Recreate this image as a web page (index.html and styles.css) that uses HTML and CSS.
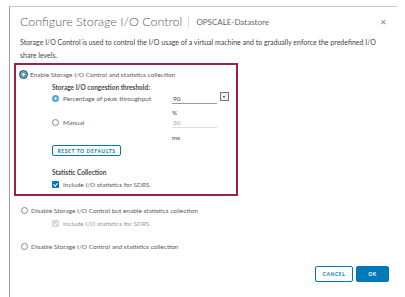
FILE: index.html
```html
<!DOCTYPE html>
<html lang="en">
<head>
    <meta charset="UTF-8">
    <title>Configure Storage I/O Control</title>
    <link rel="stylesheet" href="styles.css">
</head>
<body>
    <div class="modal">
        <div class="modal-header">
            <h3 class="modal-title">Configure Storage I/O Control</h3>
            <span class="divider"></span>
            <span class="subtitle">OPSCALE-Datastore</span>
            <span class="close">&#x2715;</span>
        </div>

        <p class="intro">Storage I/O Control is used to control the I/O usage of a virtual machine and to gradually enforce the predefined I/O share levels.</p>

        <div class="highlight">
            <label class="option">
                <span class="radio checked focus"></span>
                Enable Storage I/O Control and statistics collection
            </label>

            <div class="sub">
                <div class="sub-title">Storage I/O congestion threshold:</div>

                <div class="row">
                    <label class="option label-col">
                        <span class="radio checked"></span>
                        Percentage of peak throughput
                    </label>
                    <span class="field">90</span>
                    <span class="drop"></span>
                </div>
                <div class="row unit-row">
                    <span class="label-col"></span>
                    <span class="unit">%</span>
                </div>
                <div class="row">
                    <label class="option label-col">
                        <span class="radio"></span>
                        Manual
                    </label>
                    <span class="field disabled">30</span>
                </div>
                <div class="row unit-row ms">
                    <span class="label-col"></span>
                    <span class="unit">ms</span>
                </div>

                <button class="btn-outline reset">Reset to defaults</button>

                <div class="sub-title stat">Statistic Collection</div>
                <label class="option check-row">
                    <span class="check checked"></span>
                    Include I/O statistics for SDRS
                </label>
            </div>
        </div>

        <label class="option outer">
            <span class="radio"></span>
            Disable Storage I/O Control but enable statistics collection
        </label>
        <label class="option outer-sub muted">
            <span class="check disabled"></span>
            Include I/O statistics for SDRS
        </label>
        <label class="option outer last">
            <span class="radio"></span>
            Disable Storage I/O Control and statistics collection
        </label>

        <div class="footer">
            <button class="btn-outline cancel">Cancel</button>
            <button class="btn-primary">OK</button>
        </div>
    </div>
</body>
</html>
```

FILE: styles.css
```css
body {
    margin: 0;
    font-family: Lato, "Open Sans", sans-serif;
    color: #444;
    background: #fff;
}
.modal {
    margin: 6px 0 0 9px;
    width: 388px;
    height: 291px;
    border-top: 1px solid #c8c8c8;
    border-left: 1px solid #9a9a9a;
    box-sizing: border-box;
}
.modal-header {
    display: flex;
    align-items: center;
    height: 29px;
    padding: 0 10px;
}
.modal-title {
    margin: 0;
    font-size: 12.5px;
    font-weight: 300;
    color: #5a5a5a;
}
.divider {
    width: 1px;
    height: 12px;
    background: #ddd;
    margin: 0 7px 0 6px;
}
.subtitle {
    font-size: 8px;
    color: #666;
}
.close {
    margin-left: auto;
    font-size: 8px;
    color: #888;
}
.intro {
    margin: 0;
    padding: 0 20px 0 10px;
    font-size: 7px;
    line-height: 13px;
    color: #444;
}
.highlight {
    margin: 1px 0 0 4px;
    width: 224px;
    height: 133px;
    box-sizing: border-box;
    border: 2px solid #9b2245;
    padding: 3px 0 0 4px;
}
.option {
    display: flex;
    align-items: center;
    gap: 3px;
    font-size: 6.5px;
    color: #5c5c5c;
    height: 12px;
}
.radio {
    width: 7px;
    height: 7px;
    border: 1px solid #888;
    border-radius: 50%;
    background: #fff;
    box-sizing: border-box;
    flex: none;
}
.radio.checked {
    border: none;
    background: radial-gradient(circle, #fff 0 1px, #49afd9 1.2px);
}
.radio.focus {
    outline: 1.5px solid #333;
    outline-offset: 0;
}
.sub {
    padding-left: 32px;
}
.sub-title {
    font-size: 6.5px;
    font-weight: 700;
    color: #484848;
    height: 10px;
    line-height: 10px;
    margin-top: 3px;
}
.row {
    display: flex;
    align-items: center;
    height: 10px;
}
.unit-row {
    margin-top: 4px;
}
.ms {
    margin-top: 5px;
}
.label-col {
    width: 120px;
    flex: none;
    gap: 4px;
    height: 10px;
}
.field {
    width: 45px;
    height: 11px;
    line-height: 11px;
    font-size: 6.5px;
    border-bottom: 1px solid #999;
    box-sizing: border-box;
    padding-left: 1px;
    color: #444;
}
.field.disabled {
    color: #aaa;
    border-bottom-color: #ddd;
}
.drop {
    width: 9px;
    height: 9px;
    margin: -3px 0 0 3px;
    border: 1px solid #777;
    box-sizing: border-box;
    background: #eee;
    position: relative;
}
.drop::after {
    content: "";
    position: absolute;
    left: 2px;
    top: 3px;
    border-left: 1.5px solid transparent;
    border-right: 1.5px solid transparent;
    border-top: 2px solid #333;
}
.unit {
    font-size: 6.5px;
    color: #484848;
}
.btn-outline {
    font-family: inherit;
    font-size: 5px;
    font-weight: 700;
    letter-spacing: 0.6px;
    text-transform: uppercase;
    color: #0079b8;
    background: #fff;
    border: 1px solid #0079b8;
    border-radius: 2px;
    cursor: pointer;
}
.reset {
    display: block;
    margin-top: 3px;
    width: 69px;
    height: 11px;
    padding: 0;
}
.stat {
    margin-top: 12px;
}
.check-row {
    height: 10px;
    margin-top: 1px;
    gap: 4px;
}
.check {
    width: 7px;
    height: 7px;
    border-radius: 1px;
    box-sizing: border-box;
    flex: none;
    position: relative;
}
.check.checked {
    background: #0079b8;
}
.check.disabled {
    background: #d8d8d8;
}
.check::after {
    content: "";
    position: absolute;
    left: 2px;
    top: 1px;
    width: 1.5px;
    height: 3px;
    border-right: 1px solid #fff;
    border-bottom: 1px solid #fff;
    transform: rotate(40deg);
}
.outer {
    margin: 9px 0 0 11px;
    height: 10px;
    gap: 3px;
}
.outer-sub {
    margin: 3px 0 0 42px;
    height: 10px;
    gap: 4px;
}
.muted {
    color: #999;
}
.last {
    margin-top: 13px;
}
.footer {
    display: flex;
    justify-content: flex-end;
    gap: 3px;
    padding: 15px 8px 0 0;
}
.cancel {
    width: 38px;
    height: 16px;
    padding: 0;
}
.btn-primary {
    width: 33px;
    height: 16px;
    padding: 0;
    font-family: inherit;
    font-size: 5px;
    font-weight: 700;
    letter-spacing: 0.6px;
    color: #fff;
    background: #0079b8;
    border: 1px solid #0079b8;
    border-radius: 2px;
}
```
